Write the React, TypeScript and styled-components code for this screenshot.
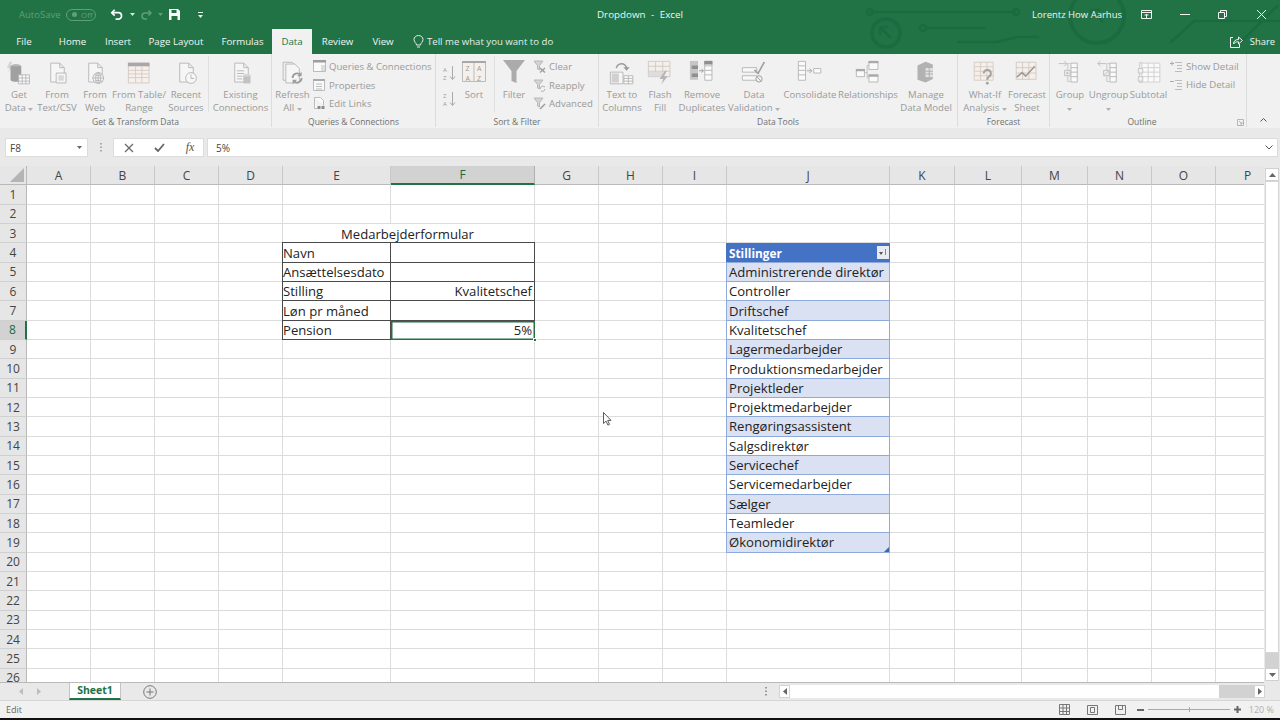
import { createGlobalStyle } from 'styled-components';
import styled from 'styled-components';
import type { ReactNode } from 'react';

const GREEN = '#217346';
const DIM = '#b4b4b4';

const COLUMNS: [string, number][] = [
  ['A', 64], ['B', 64], ['C', 64], ['D', 64], ['E', 108], ['F', 144], ['G', 64], ['H', 64],
  ['I', 64], ['J', 163], ['K', 65], ['L', 67], ['M', 66], ['N', 64], ['O', 64], ['P', 64],
];

const POSITIONS = [
  'Administrerende direktør', 'Controller', 'Driftschef', 'Kvalitetschef', 'Lagermedarbejder',
  'Produktionsmedarbejder', 'Projektleder', 'Projektmedarbejder', 'Rengøringsassistent',
  'Salgsdirektør', 'Servicechef', 'Servicemedarbejder', 'Sælger', 'Teamleder', 'Økonomidirektør',
];

const FORM: [string, string][] = [
  ['Navn', ''], ['Ansættelsesdato', ''], ['Stilling', 'Kvalitetschef'], ['Løn pr måned', ''], ['Pension', '5%'],
];

const GlobalStyle = createGlobalStyle`
  html, body { margin: 0; padding: 0; background: #fff; }
  body { font-family: "Open Sans", "Noto Sans", sans-serif; overflow: hidden; }
`;

const Window = styled.div`
  width: 1280px;
  height: 720px;
  display: flex;
  flex-direction: column;
  position: relative;
  overflow: hidden;
  background: #fff;
`;

/* ---------- title + tabs ---------- */

const Head = styled.header`
  height: 54px;
  background: ${GREEN};
  position: relative;
  flex: none;
`;

const Circuit = styled.svg`
  position: absolute;
  right: 0;
  top: 0;
`;

const TitleRow = styled.div`
  height: 29px;
  display: grid;
  grid-template-columns: 1fr auto 1fr;
  align-items: center;
  position: relative;
`;

const Quick = styled.div`
  display: flex;
  align-items: center;
  padding-left: 19px;
`;

const AutoSave = styled.span`
  font-size: 9.5px;
  color: #5f9f7c;
  width: 47px;
`;

const Toggle = styled.span`
  width: 30px;
  height: 12px;
  box-sizing: border-box;
  border: 1px solid #5f9f7c;
  border-radius: 7px;
  display: flex;
  align-items: center;
  gap: 4px;
  padding-left: 5px;
  font-size: 8px;
  color: #5f9f7c;
  margin-right: 14px;
`;

const Knob = styled.i`
  width: 5px;
  height: 5px;
  border-radius: 50%;
  background: #5f9f7c;
`;

const QuickIcon = styled.span<{ $w: number }>`
  width: ${(p) => p.$w}px;
  display: flex;
  align-items: center;
`;

const Title = styled.div`
  font-size: 9.8px;
  color: #f0f5f2;
  word-spacing: 3px;
`;

const TitleRight = styled.div`
  display: flex;
  align-items: center;
  justify-content: flex-end;
  color: #f0f5f2;
  font-size: 9.5px;
  padding-right: 13px;
`;

const UserName = styled.span`
  margin-right: 19px;
`;

const WinButton = styled.span<{ $w: number }>`
  width: ${(p) => p.$w}px;
  display: flex;
`;

const TabRow = styled.nav`
  height: 25px;
  display: flex;
  align-items: stretch;
  position: relative;
`;

const Tab = styled.div<{ $w: number; $active?: boolean }>`
  width: ${(p) => p.$w}px;
  display: flex;
  align-items: center;
  justify-content: center;
  font-size: 9.7px;
  color: ${(p) => (p.$active ? '#217346' : '#f1f6f3')};
  background: ${(p) => (p.$active ? '#f1f1f1' : 'transparent')};
`;

const TellMe = styled.div`
  display: flex;
  align-items: center;
  gap: 3px;
  padding-left: 10px;
  color: #e3eee8;
  font-size: 9.6px;
`;

const Share = styled.div`
  margin-left: auto;
  display: flex;
  align-items: center;
  gap: 7px;
  padding-right: 5px;
  color: #f1f6f3;
  font-size: 9.4px;
`;

/* ---------- ribbon ---------- */

const Ribbon = styled.section`
  height: 74px;
  flex: none;
  background: #f1f1f1;
  display: flex;
  position: relative;
`;

const Group = styled.div<{ $w: number; $last?: boolean }>`
  width: ${(p) => p.$w}px;
  flex: none;
  box-sizing: border-box;
  display: flex;
  flex-direction: column;
  border-right: ${(p) => (p.$last ? 'none' : '1px solid #dcdcdc')};
  margin-bottom: 1px;
`;

const GroupBody = styled.div`
  flex: 1;
  display: flex;
  min-height: 0;
`;

const GroupLabel = styled.div<{ $pr?: number }>`
  height: 13px;
  line-height: 16px;
  text-align: center;
  font-size: 8.5px;
  color: #707070;
  padding-right: ${(p) => p.$pr ?? 0}px;
  position: relative;
`;

const Launcher = styled.svg`
  position: absolute;
  right: 2px;
  top: 5px;
`;

const Big = styled.div<{ $w: number }>`
  width: ${(p) => p.$w}px;
  flex: none;
  display: flex;
  flex-direction: column;
  align-items: center;
  white-space: nowrap;
`;

const BigIcon = styled.div`
  height: 34px;
  box-sizing: border-box;
  padding-top: 6px;
  display: flex;
  align-items: flex-start;
  justify-content: center;
`;

const BigText = styled.div`
  font-size: 9.6px;
  line-height: 13px;
  color: #9a9a9a;
  text-align: center;
`;

const Sep = styled.div<{ $ml?: number }>`
  width: 1px;
  margin: 2px 0 2px ${(p) => p.$ml ?? 0}px;
  background: #e0e0e0;
  flex: none;
`;

const Stack = styled.div<{ $w: number; $pl?: number }>`
  width: ${(p) => p.$w}px;
  flex: none;
  box-sizing: border-box;
  padding: 3px 0 0 ${(p) => p.$pl ?? 0}px;
  display: flex;
  flex-direction: column;
`;

const Small = styled.div<{ $h?: number }>`
  height: ${(p) => p.$h ?? 18.8}px;
  display: flex;
  align-items: center;
  gap: 3px;
  font-size: 9.6px;
  color: #9a9a9a;
  white-space: nowrap;
`;

const SortCol = styled.div`
  width: 24px;
  flex: none;
  padding: 11px 0 0 7px;
  box-sizing: border-box;
  display: flex;
  flex-direction: column;
  gap: 10px;
`;

const Collapse = styled.div`
  flex: 1;
  display: flex;
  align-items: flex-end;
  justify-content: center;
  padding-bottom: 6px;
`;

/* ---------- formula bar ---------- */

const FormulaBar = styled.div`
  height: 38px;
  flex: none;
  box-sizing: border-box;
  background: #e9e9e9;
  padding: 10px 2px 9px 5px;
  display: flex;
  align-items: stretch;
`;

const NameBox = styled.div`
  width: 83px;
  background: #fff;
  border: 1px solid #dcdcdc;
  box-sizing: border-box;
  display: flex;
  align-items: center;
  justify-content: space-between;
  padding: 0 5px 0 4px;
  font-size: 10px;
  color: #444;
`;

const Grip = styled.div`
  width: 25px;
  display: flex;
  align-items: center;
  justify-content: center;
`;

const FxBox = styled.div`
  width: 91px;
  margin-right: 3px;
  background: #fff;
  border: 1px solid #dcdcdc;
  box-sizing: border-box;
  display: grid;
  grid-template-columns: 30px 31px 30px;
  align-items: center;
  justify-items: center;
`;

const FxGlyph = styled.span`
  font-family: "Liberation Serif", serif;
  font-style: italic;
  font-size: 12px;
  color: #555;
`;

const FormulaInput = styled.div`
  flex: 1;
  background: #fff;
  border: 1px solid #dcdcdc;
  box-sizing: border-box;
  display: flex;
  align-items: center;
  justify-content: space-between;
  padding: 0 4px 0 8px;
  font-size: 10px;
  color: #444;
`;

/* ---------- sheet ---------- */

const SheetArea = styled.div`
  flex: 1;
  min-height: 0;
  display: flex;
  position: relative;
`;

const Sheet = styled.div`
  flex: 1;
  min-width: 0;
  height: 516px;
  overflow: hidden;
  display: grid;
  grid-template-columns: 27px ${COLUMNS.map((c) => c[1] + 'px').join(' ')};
  grid-template-rows: 19.4px;
  grid-auto-rows: 19.34px;
  font-size: 13.1px;
  color: #222;
  border-bottom: 1px solid #b9b9b9;
`;

const Corner = styled.div`
  background: #e6e6e6;
  border-right: 1px solid #b9b9b9;
  border-bottom: 1px solid #b9b9b9;
  box-sizing: border-box;
  display: flex;
  align-items: flex-end;
  justify-content: flex-end;
  padding: 0 2px 2px 0;
`;

const ColHead = styled.div<{ $sel?: boolean }>`
  background: ${(p) => (p.$sel ? '#d2d2d2' : '#e6e6e6')};
  border-right: 1px solid ${(p) => (p.$sel ? '#b0b0b0' : '#c9c9c9')};
  border-bottom: ${(p) => (p.$sel ? `2px solid ${GREEN}` : '1px solid #b9b9b9')};
  box-sizing: border-box;
  display: flex;
  align-items: center;
  justify-content: center;
  font-size: 12px;
  color: ${(p) => (p.$sel ? '#1d6a40' : '#444')};
`;

const RowHead = styled.div<{ $sel?: boolean }>`
  background: ${(p) => (p.$sel ? '#d2d2d2' : '#e6e6e6')};
  border-right: ${(p) => (p.$sel ? `2px solid ${GREEN}` : '1px solid #b9b9b9')};
  border-bottom: 1px solid #d0d0d0;
  box-sizing: border-box;
  display: flex;
  align-items: center;
  justify-content: center;
  font-size: 12px;
  color: ${(p) => (p.$sel ? '#1d6a40' : '#444')};
`;

const Cell = styled.div`
  border-right: 1px solid #dcdcdc;
  border-bottom: 1px solid #dcdcdc;
  box-sizing: border-box;
  min-width: 0;
`;

const TitleCell = styled.div`
  grid-column: span 2;
  border-right: 1px solid #dcdcdc;
  box-sizing: border-box;
  display: flex;
  align-items: center;
  justify-content: center;
  padding-right: 2px;
`;

const FormCell = styled.div<{ $right?: boolean; $first?: boolean }>`
  border-right: 1px solid #4a4a4a;
  border-bottom: 1px solid #4a4a4a;
  border-left: ${(p) => (p.$first ? '1px solid #4a4a4a' : 'none')};
  box-shadow: 0 -1px 0 #4a4a4a;
  box-sizing: border-box;
  display: flex;
  align-items: center;
  justify-content: ${(p) => (p.$right ? 'flex-end' : 'flex-start')};
  padding: 0 2px 0 ${(p) => (p.$first ? 0 : 2)}px;
  margin-left: ${(p) => (p.$first ? -1 : 0)}px;
  white-space: nowrap;
`;

const ActiveCell = styled(FormCell)`
  position: relative;
  border: none;
  padding-right: 3px;
  box-shadow: inset 0 0 0 1.5px ${GREEN};
  &::after {
    content: '';
    position: absolute;
    right: -2px;
    bottom: -2px;
    width: 4px;
    height: 4px;
    background: ${GREEN};
    border: 1px solid #fff;
    box-sizing: border-box;
  }
`;

const TableHead = styled.div`
  background: #4472c4;
  color: #fff;
  font-weight: 700;
  font-size: 11.8px;
  margin-left: -1px;
  display: flex;
  align-items: center;
  justify-content: space-between;
  padding: 0 1px 0 3px;
  box-sizing: border-box;
  border-bottom: 1px solid #8ea9db;
`;

const FilterButton = styled.span`
  width: 12px;
  height: 13px;
  background: #e8ebf2;
  display: flex;
  align-items: center;
  justify-content: center;
`;

const TableCell = styled.div<{ $odd: boolean; $end?: boolean }>`
  background: ${(p) => (p.$odd ? '#d9e1f2' : '#fff')};
  border-bottom: 1px solid #8ea9db;
  border-right: 1px solid #8ea9db;
  border-left: 1px solid #8ea9db;
  margin-left: -1px;
  box-sizing: border-box;
  display: flex;
  align-items: center;
  padding-left: 2px;
  white-space: nowrap;
  position: relative;
  ${(p) =>
    p.$end
      ? `&::after {
    content: '';
    position: absolute;
    right: 0;
    bottom: 0;
    border-style: solid;
    border-width: 0 0 5px 5px;
    border-color: transparent transparent #3f66b0 transparent;
  }`
      : ''}
`;

const VScroll = styled.div`
  width: 16px;
  flex: none;
  background: #e9e9e9;
  box-sizing: border-box;
  padding: 2px 1px;
  display: flex;
  flex-direction: column;
`;

const ScrollArrow = styled.div`
  height: 13px;
  flex: none;
  background: #fff;
  border: 1px solid #d0d0d0;
  box-sizing: border-box;
  display: flex;
  align-items: center;
  justify-content: center;
`;

const VThumb = styled.div`
  flex: 1;
  background: #fff;
  border: 1px solid #d6d6d6;
  box-sizing: border-box;
`;

const VTrack = styled.div`
  height: 15px;
  flex: none;
  background: #d2d2d2;
`;

const Pointer = styled.svg`
  position: absolute;
  left: 603px;
  top: 246px;
`;

/* ---------- tabs + status ---------- */

const SheetBar = styled.div`
  height: 17px;
  flex: none;
  background: #e9e9e9;
  display: flex;
  align-items: stretch;
`;

const TabNav = styled.div`
  width: 69px;
  display: flex;
  align-items: center;
  gap: 14px;
  padding-left: 19px;
  box-sizing: border-box;
`;

const SheetTab = styled.div`
  width: 52px;
  background: #fff;
  border-bottom: 2px solid ${GREEN};
  border-left: 1px solid #c4c4c4;
  border-right: 1px solid #c4c4c4;
  box-sizing: border-box;
  display: flex;
  align-items: center;
  justify-content: center;
  font-size: 10.5px;
  font-weight: 700;
  color: ${GREEN};
  margin-top: -1px;
`;

const AddSheet = styled.div`
  width: 46px;
  display: flex;
  align-items: center;
  padding-left: 22px;
  box-sizing: border-box;
`;

const HDots = styled.div`
  margin-left: auto;
  width: 14px;
  display: flex;
  align-items: center;
`;

const HScroll = styled.div`
  width: 486px;
  margin-right: 15px;
  display: flex;
  align-items: center;
`;

const HArrow = styled.div`
  width: 11px;
  height: 13px;
  flex: none;
  background: #fff;
  border: 1px solid #d4d4d4;
  box-sizing: border-box;
  display: flex;
  align-items: center;
  justify-content: center;
`;

const HThumb = styled.div`
  width: 429px;
  height: 13px;
  background: #fff;
  flex: none;
`;

const HTrack = styled.div`
  flex: 1;
  height: 13px;
  background: #d2d2d2;
`;

const Status = styled.footer`
  height: 18px;
  flex: none;
  background: #f1f1f1;
  border-top: 1px solid #d6d6d6;
  box-sizing: border-box;
  display: flex;
  align-items: center;
  padding-left: 6px;
  font-size: 9px;
  color: #666;
`;

const StatusRight = styled.div`
  margin-left: auto;
  display: flex;
  align-items: center;
  padding-right: 6px;
`;

const ViewButton = styled.span<{ $w: number }>`
  width: ${(p) => p.$w}px;
  display: flex;
`;

const Slider = styled.div`
  width: 82px;
  height: 1px;
  background: #a9a9a9;
  margin: 0 4px;
  position: relative;
  &::after {
    content: '';
    position: absolute;
    left: 41px;
    top: -2px;
    width: 1px;
    height: 5px;
    background: #a9a9a9;
  }
`;

const ZoomPct = styled.span`
  margin-left: 8px;
  color: #b0b0b0;
  font-size: 9px;
`;

const BlackEdge = styled.div`
  height: 2px;
  flex: none;
  background: #111;
`;

/* ---------- icons ---------- */

const Ico = ({ w = 28, h = 28, children }: { w?: number; h?: number; children: ReactNode }) => (
  <svg width={w * 0.9} height={h * 0.9} viewBox={`0 0 ${w} ${h}`} fill="none" stroke={DIM} strokeWidth="1">
    {children}
  </svg>
);

const Page = () => <path d="M7.500 3.500h10l5 5v16h-15zM17.500 3.500v5h5" fill="#f6f6f6" />;

const IconGetData = () => (
  <Ico w={30}>
    <path d="M4 2l-3 7h3l-2 5 6-8H5l2-4z" fill="#d6d6d6" stroke="none" />
    <ellipse cx="11" cy="7" rx="6" ry="2.500" fill="#b8b8b8" stroke="none" />
    <path d="M5 7v15c0 3 12 3 12 0V7z" fill="#a0a0a0" stroke="none" />
    <path d="M14 16.500h12v10H14zM14 20h12M14 23.500h12M18 16.500v10M22 16.500v10" fill="#fbfbfb" />
  </Ico>
);

const IconText = () => (
  <Ico>
    <Page />
    <path d="M13.500 14.500h11v11h-11z" fill="#f6f6f6" />
    <path d="M16 17h6v6h-6z" fill="#d8d8d8" stroke="none" />
  </Ico>
);

const IconWeb = () => (
  <Ico>
    <Page />
    <circle cx="18" cy="20" r="6" fill="#f6f6f6" />
    <path d="M12 20h12M18 14v12M14 16.500c2.500 1 5.500 1 8 0M14 23.500c2.500-1 5.500-1 8 0" />
    <ellipse cx="18" cy="20" rx="2.800" ry="6" />
  </Ico>
);

const IconTable = () => (
  <Ico w={26}>
    <path d="M1.500 3.500h23v22h-23z" fill="#f7efea" stroke="#cfc8c4" />
    <path d="M1 3h24v4H1z" fill="#a8a8a8" stroke="none" />
    <path d="M1.500 11.500h23M1.500 15.500h23M1.500 19.500h23M9.500 7v18M16.500 7v18" stroke="#d5cbc5" />
  </Ico>
);

const IconRecent = () => (
  <Ico>
    <Page />
    <circle cx="20" cy="20" r="6" fill="#f6f6f6" />
    <path d="M20 16v4.500h3.500" />
  </Ico>
);

const IconExisting = () => (
  <Ico>
    <Page />
    <path d="M10 12h8M10 15h8M10 18h6M10 21h6" />
    <path d="M17 17h8v9h-8z" fill="#c2c2c2" stroke="none" />
    <ellipse cx="21" cy="17" rx="4" ry="1.500" fill="#d6d6d6" stroke="none" />
  </Ico>
);

const IconRefresh = () => (
  <Ico>
    <path d="M3.500 2.500h10l4 4v16h-14z" fill="#f1f1f1" />
    <path d="M6.500 4.500h10l5 5v16h-15z" fill="#f6f6f6" />
    <path d="M14 20a5 5 0 0 1 9-3M24 20a5 5 0 0 1-9 3" stroke="#9c9c9c" strokeWidth="2" />
    <path d="M24 13v5h-5zM14 27v-5h5z" fill="#9c9c9c" stroke="none" />
  </Ico>
);

const SortLetters = ({ top, bottom }: { top: string; bottom: string }) => (
  <svg width="14" height="16" viewBox="0 0 14 16" fill="none" stroke="#aaa">
    <text x="0" y="6.500" fontSize="6" fill="#999" stroke="none" fontFamily="Open Sans">{top}</text>
    <text x="0" y="15" fontSize="6" fill="#999" stroke="none" fontFamily="Open Sans">{bottom}</text>
    <path d="M9.500 1v13M7 11.500l2.500 3 2.500-3" />
  </svg>
);

const IconSort = () => (
  <svg width="24" height="24" viewBox="0 0 24 24" fill="none" stroke="#bbb">
    <path d="M.5 2.500h23v19H.5zM12 2.500v19" fill="#f6f0ec" />
    <path d="M0 1h24v2H0z" fill="#a8a8a8" stroke="none" />
    <text x="3.500" y="10.500" fontSize="7" fill="#999" stroke="none" fontFamily="Open Sans">Z</text>
    <text x="3.500" y="20.500" fontSize="7" fill="#999" stroke="none" fontFamily="Open Sans">A</text>
    <text x="15" y="10.500" fontSize="7" fill="#999" stroke="none" fontFamily="Open Sans">A</text>
    <text x="15" y="20.500" fontSize="7" fill="#999" stroke="none" fontFamily="Open Sans">Z</text>
  </svg>
);

const IconFilter = () => (
  <svg width="24" height="24" viewBox="0 0 24 24">
    <path d="M1 0h22L14.500 11v12l-5-2V11z" fill="#ababab" />
  </svg>
);

const SmallFunnel = ({ kind }: { kind: 'clear' | 'reapply' | 'advanced' }) => (
  <svg width="13" height="13" viewBox="0 0 13 13" fill="none" stroke="#b8b8b8">
    <path d="M1 1h9L6.500 5.500V10L4.500 9V5.500z" fill="#d4d4d4" />
    {kind === 'clear' && <path d="M7 8l5 4.500M12 8l-5 4.500" stroke="#9b9b9b" strokeWidth="1.300" />}
    {kind === 'reapply' && <path d="M7 10a3 3 0 0 1 5-2M12 10a3 3 0 0 1-4 2" stroke="#aaa" />}
    {kind === 'advanced' && <path d="M7 12l5-5" stroke="#9b9b9b" strokeWidth="1.500" />}
  </svg>
);

const IconTextCol = () => (
  <Ico>
    <path d="M1.500 13.500h14v13h-14z" fill="#f6f6f6" />
    <path d="M3 15h8v10H3z" fill="#d0d0d0" stroke="none" />
    <path d="M16.500 17.500h10v9h-10zM16.500 20.500h10M16.500 23.500h10M21.500 17.500v9" fill="#fafafa" />
    <path d="M8 9c2-6 9-7 12 0" stroke="#999" strokeWidth="1.500" />
    <path d="M16 8h7l-3.500 4z" fill="#999" stroke="none" />
  </Ico>
);

const IconFlash = () => (
  <Ico>
    <path d="M1.500 1.500h24v17h-24zM1.500 7h24M1.500 12.500h24M9.500 1.500v17M17.500 1.500v17" stroke="#cfc8c4" fill="#f5efea" />
    <path d="M2 13h15v5H2z" fill="#ddd" stroke="none" />
    <path d="M20 12l-6 9h4l-2 6 7-9h-4l3-6z" fill="#b5b5b5" stroke="none" />
  </Ico>
);

const IconDuplicates = () => (
  <Ico>
    <path d="M1 1h9v21H1z" fill="#c6c6c6" stroke="none" />
    <path d="M3 6h7v4H3zM3 15h7v4H3z" fill="#8f8f8f" stroke="none" />
    <path d="M17.500 1.500h8v21h-8zM17.500 6.500h8M17.500 11.500h8M17.500 16.500h8" fill="#fafafa" />
    <path d="M17 1h9v4h-9z" fill="#8f8f8f" stroke="none" />
    <path d="M11 12h5M14 10l2 2-2 2" stroke="#999" />
  </Ico>
);

const IconValidation = () => (
  <Ico>
    <path d="M1.500 8.500h16v5h-16zM1.500 17.500h16v5h-16z" fill="#f8f8f8" />
    <path d="M15 11l4 4 7-13" stroke="#a0a0a0" strokeWidth="1.800" />
    <circle cx="20" cy="21" r="3.500" fill="#f1f1f1" stroke="#999" />
    <path d="M18 19l4 4" stroke="#999" />
  </Ico>
);

const IconConsolidate = () => (
  <Ico>
    <path d="M1.500 1.500h8v21h-8zM1.500 6.500h8M1.500 11.500h8M1.500 16.500h8" fill="#fafafa" />
    <path d="M11 12h5M14 9.500l2.500 2.500-2.500 2.500" stroke="#a0a0a0" />
    <path d="M18.500 9.500h8v5h-8z" fill="#fafafa" />
  </Ico>
);

const IconRelations = () => (
  <Ico>
    <path d="M1.500 10.500h9v8h-9zM15.500 1.500h10v9h-10zM15.500 16.500h10v8h-10z" fill="#fafafa" />
    <path d="M1 10h10v2.500H1zM15 1h11v2.500H15zM15 16h11v2.500H15z" fill="#aaa" stroke="none" />
    <path d="M11 14h2.500V6H15M13.500 14v6H15" stroke="#bbb" />
  </Ico>
);

const IconModel = () => (
  <Ico>
    <path d="M5 6l9-4 8 3v16l-8 4-9-3z" fill="#b2b2b2" stroke="none" />
    <path d="M14 9h8v10h-8z" fill="#e4e4e4" stroke="none" />
    <path d="M14 12.500h8M14 15.500h8M18 9v10" stroke="#aaa" />
  </Ico>
);

const IconWhatIf = () => (
  <Ico>
    <path d="M2.500 2.500h21v20h-21zM2.500 7.500h21M2.500 12.500h21M2.500 17.500h21M9.500 2.500v20M16.500 2.500v20" stroke="#d5cbc5" fill="#f6efe9" />
    <path d="M13 15a4 4 0 1 1 6.200 3.300c-1.700 1.100-2.200 2-2.200 3.700" stroke="#a5a5a5" strokeWidth="2.400" />
    <circle cx="17" cy="25.800" r="1.600" fill="#a5a5a5" stroke="none" />
  </Ico>
);

const IconForecast = () => (
  <Ico>
    <path d="M2.500 2.500h22v19h-22zM2.500 8.500h22M2.500 14.500h22M9.500 2.500v19M16.500 2.500v19" stroke="#cfc8c4" fill="#f6efe9" />
    <path d="M3 19l6-5 4 4 10-11" stroke="#9a9a9a" strokeWidth="1.800" />
  </Ico>
);

const OutlineRows = () => (
  <>
    <path d="M15.500 3.500h7v21h-7zM15.500 8.500h7M15.500 13.500h7M15.500 18.500h7" fill="#fafafa" />
    <path d="M15 4h-3v20h3" stroke="#c5c5c5" />
  </>
);

const IconGroup = () => (
  <Ico>
    <OutlineRows />
    <path d="M2 4h9M8 1l3 3-3 3" stroke="#bbb" />
    <path d="M8.500 11.500h6v6h-6zM10 14.500h3M11.500 13v3" fill="#f1f1f1" stroke="#bbb" />
  </Ico>
);

const IconUngroup = () => (
  <Ico>
    <OutlineRows />
    <path d="M11 4H2M5 1L2 4l3 3" stroke="#bbb" />
    <path d="M8.500 11.500h6v6h-6zM9 17l5-5" fill="#f1f1f1" stroke="#bbb" />
  </Ico>
);

const IconSubtotal = () => (
  <Ico>
    <path d="M6.500 3.500h20v21h-20zM6.500 8.500h20M6.500 13.500h20M6.500 18.500h20M13.500 3.500v21M20 3.500v21" stroke="#cfcfcf" fill="#fafafa" />
    <path d="M4 3h3M4 3v22h3" stroke="#c8c8c8" />
    <path d="M2.500 9.500h5v5h-5zM2.500 18.500h5v5h-5z" fill="#f1f1f1" stroke="#c4c4c4" />
  </Ico>
);

const IconDetail = ({ sign }: { sign: 'plus' | 'minus' }) => (
  <svg width="13" height="11" viewBox="0 0 13 11" fill="none" stroke="#bbb">
    <path d="M5 1.500h7M7 4.500h5M7 7.500h5M5 10.500h7" />
    <path d={sign === 'plus' ? 'M0 2.500h4M2 .5v4' : 'M0 2.500h4'} stroke="#aaa" />
  </svg>
);

const IconQueries = () => (
  <svg width="13" height="13" viewBox="0 0 13 13" fill="none" stroke="#bbb">
    <path d="M.5.5h12v11H.5z" fill="#fafafa" />
    <path d="M0 0h13v2.500H0z" fill="#9d9d9d" stroke="none" />
    <path d="M8 5h4v6H8z" fill="#ddd" stroke="none" />
  </svg>
);

const IconProps = () => (
  <svg width="13" height="13" viewBox="0 0 13 13" fill="none" stroke="#bbb">
    <path d="M.5.5h11v11H.5z" fill="#fafafa" />
    <path d="M0 0h12v2H0z" fill="#aaa" stroke="none" />
    <path d="M3 5h6M3 7.500h6M3 10h6" />
  </svg>
);

const IconLinks = () => (
  <svg width="13" height="13" viewBox="0 0 13 13" fill="none" stroke="#bbb">
    <path d="M1.500.5h6l3 3v5M1.500.5v11h3" fill="#fafafa" />
    <path d="M4.500 10.500h7" stroke="#8b8b8b" strokeWidth="3" strokeDasharray="3 1" />
  </svg>
);

const Caret = ({ color = '#777' }: { color?: string }) => (
  <svg width="5" height="3" viewBox="0 0 5 3">
    <path d="M0 0h5L2.500 3z" fill={color} />
  </svg>
);

const ScrollTri = ({ dir, color = '#666' }: { dir: 'up' | 'down' | 'left' | 'right'; color?: string }) => {
  const d = { up: 'M0 4h7L3.500 0z', down: 'M0 0h7L3.500 4z', left: 'M4 0v7L0 3.500z', right: 'M0 0v7l4-3.500z' }[dir];
  const vertical = dir === 'up' || dir === 'down';
  return (
    <svg width={vertical ? 7 : 4} height={vertical ? 4 : 7}>
      <path d={d} fill={color} />
    </svg>
  );
};

const GREY_CAPTION = '#b0b0b0';

const BigButton = ({ w, icon, lines, caret }: { w: number; icon: ReactNode; lines: string[]; caret?: boolean }) => (
  <Big $w={w}>
    <BigIcon>{icon}</BigIcon>
    <BigText>
      {lines[0]}
      <br />
      {lines[1] ?? ''}
      {caret && (
        <>
          {' '}
          <Caret color={GREY_CAPTION} />
        </>
      )}
    </BigText>
  </Big>
);

export default function App() {
  const rows = Array.from({ length: 26 }, (_, i) => i + 1);

  const renderCell = (row: number, col: string) => {
    const key = `${col}${row}`;
    if (col === 'E' && row === 3) return <TitleCell key={key}>Medarbejderformular</TitleCell>;
    if (col === 'F' && row === 3) return null;
    if (row >= 4 && row <= 8 && (col === 'E' || col === 'F')) {
      const [label, value] = FORM[row - 4];
      if (col === 'E') return <FormCell key={key} $first>{label}</FormCell>;
      if (row === 8) return <ActiveCell key={key} $right>{value}</ActiveCell>;
      return <FormCell key={key} $right>{value}</FormCell>;
    }
    if (col === 'J' && row === 4) {
      return (
        <TableHead key={key}>
          Stillinger
          <FilterButton>
            <svg width="9" height="8" viewBox="0 0 9 8">
              <path d="M0 3h4L2 6z" fill="#555" />
              <path d="M6.500 0v6" stroke="#888" />
            </svg>
          </FilterButton>
        </TableHead>
      );
    }
    if (col === 'J' && row >= 5 && row <= 19) {
      return (
        <TableCell key={key} $odd={row % 2 === 1} $end={row === 19}>
          {POSITIONS[row - 5]}
        </TableCell>
      );
    }
    return <Cell key={key} />;
  };

  return (
    <Window>
      <GlobalStyle />
      <Head>
        <Circuit width="420" height="54" viewBox="0 0 420 54" fill="none" stroke="#1c6a3f" strokeWidth="2.500">
          <path d="M10 12h146" />
          <circle cx="10" cy="12" r="3" />
          <circle cx="156" cy="12" r="3" />
          <circle cx="26" cy="33" r="14" strokeWidth="3.500" />
          <path d="M20 27l11 11M20 27h8M20 27v8" />
          <circle cx="63" cy="28" r="3" />
          <path d="M66 28h60M97 42h40l20-5h22" />
          <circle cx="237" cy="16" r="27" strokeWidth="4" />
          <path d="M231 10l12 12M231 10h9M231 10v9" />
          <path d="M310 43l24-22h86M380 43l38-38" />
        </Circuit>
        <TitleRow>
          <Quick>
            <AutoSave>AutoSave</AutoSave>
            <Toggle>
              <Knob />
              Off
            </Toggle>
            <QuickIcon $w={20}>
              <svg width="13" height="11" viewBox="0 0 14 12" fill="none" stroke="#fff" strokeWidth="1.800">
                <path d="M2 4h7a3.500 3.500 0 0 1 0 7H6" />
                <path d="M5 .8L1.800 4 5 7.200" />
              </svg>
            </QuickIcon>
            <QuickIcon $w={10}>
              <Caret color="#d8e8df" />
            </QuickIcon>
            <QuickIcon $w={18}>
              <svg width="12" height="10" viewBox="0 0 12 10" fill="none" stroke="#5f9f7c" strokeWidth="1.500">
                <path d="M11 3H5a3 3 0 0 0 0 6h2" />
                <path d="M8.500.5L11 3 8.500 5.500" />
              </svg>
            </QuickIcon>
            <QuickIcon $w={11}>
              <Caret color="#5f9f7c" />
            </QuickIcon>
            <QuickIcon $w={29}>
              <svg width="11" height="11" viewBox="0 0 11 11">
                <path d="M0 0h9l2 2v9H0z" fill="#fff" />
                <path d="M2.500 1h5v3h-5z" fill={GREEN} />
                <path d="M2.500 7h6v4h-6z" fill={GREEN} />
              </svg>
            </QuickIcon>
            <QuickIcon $w={8}>
              <svg width="5" height="6" viewBox="0 0 5 6">
                <path d="M0 0h5v1H0zM0 3h5L2.500 6z" fill="#e7f0eb" />
              </svg>
            </QuickIcon>
          </Quick>
          <Title>Dropdown - Excel</Title>
          <TitleRight>
            <UserName>Lorentz How Aarhus</UserName>
            <WinButton $w={39}>
              <svg width="11" height="9" viewBox="0 0 11 9" fill="none" stroke="#f0f5f2">
                <path d="M.5.5h10v8H.5zM.5 2.500h10M5.500 4v4M3.500 5h4" />
              </svg>
            </WinButton>
            <WinButton $w={38}>
              <svg width="10" height="1" viewBox="0 0 10 1">
                <path d="M0 .5h10" stroke="#f0f5f2" />
              </svg>
            </WinButton>
            <WinButton $w={38}>
              <svg width="9" height="9" viewBox="0 0 9 9" fill="none" stroke="#f0f5f2">
                <path d="M.5 2.500h6v6h-6zM2.500 2.500v-2h6v6h-2" />
              </svg>
            </WinButton>
            <WinButton $w={11}>
              <svg width="11" height="11" viewBox="0 0 11 11" stroke="#f0f5f2">
                <path d="M1 1l9 9M10 1l-9 9" />
              </svg>
            </WinButton>
          </TitleRight>
        </TitleRow>
        <TabRow>
          <Tab $w={48}>File</Tab>
          <Tab $w={49}>Home</Tab>
          <Tab $w={42}>Insert</Tab>
          <Tab $w={74}>Page Layout</Tab>
          <Tab $w={59}>Formulas</Tab>
          <Tab $w={40} $active>Data</Tab>
          <Tab $w={51}>Review</Tab>
          <Tab $w={40}>View</Tab>
          <TellMe>
            <svg width="11" height="14" viewBox="0 0 11 14" fill="none" stroke="#e3eee8">
              <path d="M3.500 10C3.500 8 1 7 1 4.500a4.500 4 0 0 1 9 0C10 7 7.500 8 7.500 10zM4 12h3" />
            </svg>
            Tell me what you want to do
          </TellMe>
          <Share>
            <svg width="13" height="12" viewBox="0 0 13 12" fill="none" stroke="#f1f6f3">
              <path d="M3 1.500H.5v10h9V8" />
              <path d="M3.500 8c0-3 2-4.500 5-4.500V1l4 3.500L8.500 8V5.800C6 5.800 4.500 6.500 3.500 8z" />
            </svg>
            Share
          </Share>
        </TabRow>
      </Head>

      <Ribbon>
        <Group $w={272}>
          <GroupBody>
            <BigButton w={38} icon={<IconGetData />} lines={['Get', 'Data']} caret />
            <BigButton w={38} icon={<IconText />} lines={['From', 'Text/CSV']} />
            <BigButton w={38} icon={<IconWeb />} lines={['From', 'Web']} />
            <BigButton w={50} icon={<IconTable />} lines={['From Table/', 'Range']} />
            <BigButton w={44} icon={<IconRecent />} lines={['Recent', 'Sources']} />
            <Sep />
            <BigButton w={63} icon={<IconExisting />} lines={['Existing', 'Connections']} />
          </GroupBody>
          <GroupLabel>Get &amp; Transform Data</GroupLabel>
        </Group>
        <Group $w={164}>
          <GroupBody>
            <BigButton w={41} icon={<IconRefresh />} lines={['Refresh', 'All']} caret />
            <Stack $w={123}>
              <Small><IconQueries />Queries &amp; Connections</Small>
              <Small><IconProps />Properties</Small>
              <Small><IconLinks />Edit Links</Small>
            </Stack>
          </GroupBody>
          <GroupLabel>Queries &amp; Connections</GroupLabel>
        </Group>
        <Group $w={163}>
          <GroupBody>
            <SortCol>
              <SortLetters top="A" bottom="Z" />
              <SortLetters top="Z" bottom="A" />
            </SortCol>
            <BigButton w={28} icon={<IconSort />} lines={['Sort']} />
            <Sep $ml={6} />
            <BigButton w={38} icon={<IconFilter />} lines={['Filter']} />
            <Stack $w={65}>
              <Small><SmallFunnel kind="clear" />Clear</Small>
              <Small><SmallFunnel kind="reapply" />Reapply</Small>
              <Small><SmallFunnel kind="advanced" />Advanced</Small>
            </Stack>
          </GroupBody>
          <GroupLabel>Sort &amp; Filter</GroupLabel>
        </Group>
        <Group $w={359}>
          <GroupBody>
            <BigButton w={46} icon={<IconTextCol />} lines={['Text to', 'Columns']} />
            <BigButton w={30} icon={<IconFlash />} lines={['Flash', 'Fill']} />
            <BigButton w={54} icon={<IconDuplicates />} lines={['Remove', 'Duplicates']} />
            <BigButton w={50} icon={<IconValidation />} lines={['Data', 'Validation']} caret />
            <BigButton w={62} icon={<IconConsolidate />} lines={['Consolidate']} />
            <BigButton w={54} icon={<IconRelations />} lines={['Relationships']} />
            <BigButton w={62} icon={<IconModel />} lines={['Manage', 'Data Model']} />
          </GroupBody>
          <GroupLabel>Data Tools</GroupLabel>
        </Group>
        <Group $w={92}>
          <GroupBody>
            <BigButton w={54} icon={<IconWhatIf />} lines={['What-If', 'Analysis']} caret />
            <BigButton w={30} icon={<IconForecast />} lines={['Forecast', 'Sheet']} />
          </GroupBody>
          <GroupLabel>Forecast</GroupLabel>
        </Group>
        <Group $w={197}>
          <GroupBody>
            <BigButton w={40} icon={<IconGroup />} lines={['Group', '']} caret />
            <BigButton w={37} icon={<IconUngroup />} lines={['Ungroup', '']} caret />
            <BigButton w={43} icon={<IconSubtotal />} lines={['Subtotal']} />
            <Stack $w={77}>
              <Small $h={18}><IconDetail sign="plus" />Show Detail</Small>
              <Small $h={18}><IconDetail sign="minus" />Hide Detail</Small>
            </Stack>
          </GroupBody>
          <GroupLabel $pr={12}>
            Outline
            <Launcher width="7" height="7" viewBox="0 0 7 7" fill="none" stroke="#b5b5b5">
              <path d="M.5.5h6v6h-6zM2 2l3 3M5 3v2H3" />
            </Launcher>
          </GroupLabel>
        </Group>
        <Collapse>
          <svg width="7" height="4" viewBox="0 0 7 4" fill="none" stroke="#555">
            <path d="M.5 3.500l3-3 3 3" />
          </svg>
        </Collapse>
      </Ribbon>

      <FormulaBar>
        <NameBox>
          F8
          <Caret color="#666" />
        </NameBox>
        <Grip>
          <svg width="2" height="9" viewBox="0 0 2 9">
            <path d="M0 0h2v1.500H0zM0 3.500h2V5H0zM0 7h2v1.500H0z" fill="#aaa" />
          </svg>
        </Grip>
        <FxBox>
          <svg width="10" height="10" viewBox="0 0 10 10" stroke="#666" strokeWidth="1.200">
            <path d="M1 1l8 8M9 1L1 9" />
          </svg>
          <svg width="11" height="9" viewBox="0 0 11 9" fill="none" stroke="#666" strokeWidth="1.800">
            <path d="M1 5l3 3 6-7" />
          </svg>
          <FxGlyph>fx</FxGlyph>
        </FxBox>
        <FormulaInput>
          5%
          <svg width="8" height="5" viewBox="0 0 8 5" fill="none" stroke="#555">
            <path d="M.5.5L4 4 7.500.5" />
          </svg>
        </FormulaInput>
      </FormulaBar>

      <SheetArea>
        <Sheet>
          <Corner>
            <svg width="14" height="14" viewBox="0 0 14 14">
              <path d="M14 0v14H0z" fill="#b4b4b4" />
            </svg>
          </Corner>
          {COLUMNS.map(([name]) => (
            <ColHead key={name} $sel={name === 'F'}>{name}</ColHead>
          ))}
          {rows.map((row) => (
            <Row key={row} row={row} renderCell={renderCell} />
          ))}
        </Sheet>
        <VScroll>
          <ScrollArrow><ScrollTri dir="up" /></ScrollArrow>
          <VThumb />
          <VTrack />
          <ScrollArrow><ScrollTri dir="down" /></ScrollArrow>
        </VScroll>
        <Pointer width="9" height="14" viewBox="0 0 9 14">
          <path d="M.5.5v11l2.600-2.400 1.800 4 1.600-.7-1.800-4H8z" fill="#fff" stroke="#333" strokeWidth=".8" />
        </Pointer>
      </SheetArea>

      <SheetBar>
        <TabNav>
          <ScrollTri dir="left" color="#bdbdbd" />
          <ScrollTri dir="right" color="#bdbdbd" />
        </TabNav>
        <SheetTab>Sheet1</SheetTab>
        <AddSheet>
          <svg width="14" height="14" viewBox="0 0 14 14" fill="none" stroke="#777">
            <circle cx="7" cy="7" r="6.300" />
            <path d="M3.500 7h7M7 3.500v7" />
          </svg>
        </AddSheet>
        <HDots>
          <svg width="2" height="9" viewBox="0 0 2 9">
            <path d="M0 0h2v1.500H0zM0 3.500h2V5H0zM0 7h2v1.500H0z" fill="#999" />
          </svg>
        </HDots>
        <HScroll>
          <HArrow><ScrollTri dir="left" /></HArrow>
          <HThumb />
          <HTrack />
          <HArrow><ScrollTri dir="right" /></HArrow>
        </HScroll>
      </SheetBar>

      <Status>
        Edit
        <StatusRight>
          <ViewButton $w={28}>
            <svg width="11" height="11" viewBox="0 0 11 11" fill="none" stroke="#777">
              <path d="M.5.5h10v10H.5zM.5 4h10M.5 7.500h10M4 .5v10M7.500.5v10" />
            </svg>
          </ViewButton>
          <ViewButton $w={28}>
            <svg width="11" height="10" viewBox="0 0 11 10" fill="none" stroke="#777">
              <path d="M.5.5h10v9H.5zM3.500 2.500h4v5h-4z" />
            </svg>
          </ViewButton>
          <ViewButton $w={22}>
            <svg width="11" height="10" viewBox="0 0 11 10" fill="none" stroke="#777">
              <path d="M.5.5h10v9H.5zM3.500.5v4h4v-4" />
            </svg>
          </ViewButton>
          <svg width="7" height="2" viewBox="0 0 7 2">
            <path d="M0 0h7v2H0z" fill="#666" />
          </svg>
          <Slider />
          <svg width="7" height="7" viewBox="0 0 7 7">
            <path d="M0 2.500h7v2H0zM2.500 0h2v7h-2z" fill="#666" />
          </svg>
          <ZoomPct>120 %</ZoomPct>
        </StatusRight>
      </Status>
      <BlackEdge />
    </Window>
  );
}

const Row = ({ row, renderCell }: { row: number; renderCell: (row: number, col: string) => ReactNode }) => (
  <>
    <RowHead $sel={row === 8}>{row}</RowHead>
    {COLUMNS.map(([name]) => renderCell(row, name))}
  </>
);
